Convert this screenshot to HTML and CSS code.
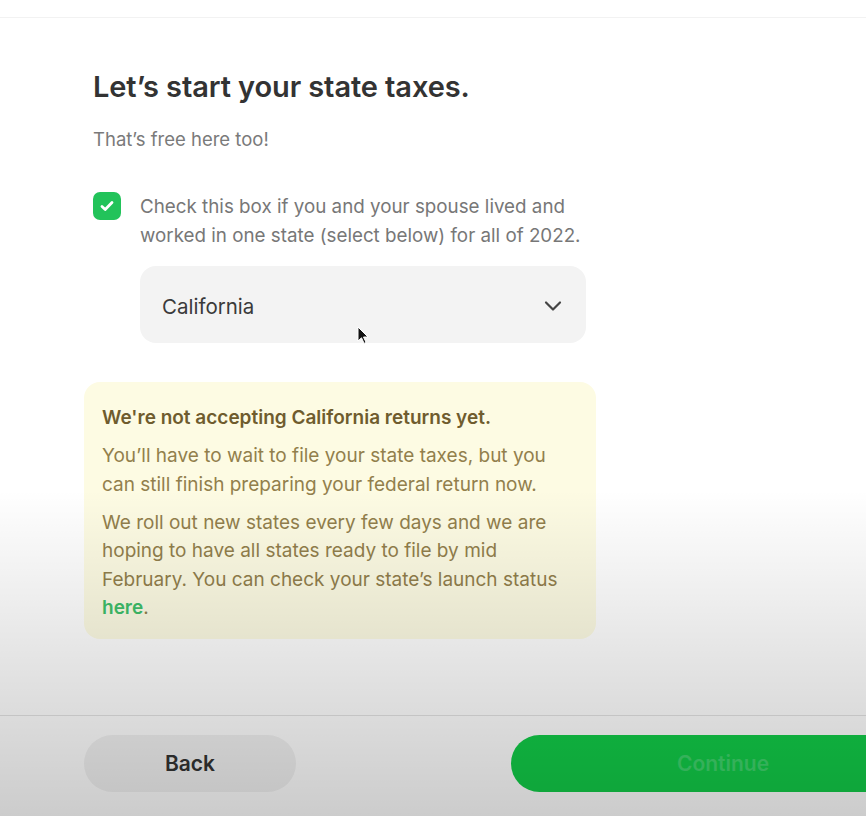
FILE: index.html
```html
<!DOCTYPE html>
<html lang="en">
<head>
    <meta charset="UTF-8">
    <meta name="viewport" content="width=device-width, initial-scale=1.0">
    <title>State taxes</title>
    <link rel="stylesheet" href="styles.css">
</head>
<body>
    <div class="topbar"></div>

    <div class="main">
        <h1>Let’s start your state taxes.</h1>
        <p class="sub">That’s free here too!</p>

        <div class="check-row">
            <span class="checkbox">
                <svg width="18" height="18" viewBox="0 0 18 18"><path d="M4 9.5l3.2 3 6.8-7" fill="none" stroke="#fff" stroke-width="2.8" stroke-linecap="round" stroke-linejoin="round"/></svg>
            </span>
            <p class="check-text">Check this box if you and your spouse lived and worked in one state (select below) for all of 2022.</p>
        </div>

        <div class="select">
            <span>California</span>
            <svg width="18" height="12" viewBox="0 0 18 12"><path d="M2 2.5l7 7 7-7" fill="none" stroke="#444" stroke-width="2.2" stroke-linecap="round" stroke-linejoin="round"/></svg>
        </div>

        <div class="notice">
            <p class="notice-title">We're not accepting California returns yet.</p>
            <p>You’ll have to wait to file your state taxes, but you can still finish preparing your federal return now.</p>
            <p>We roll out new states every few days and we are hoping to have all states ready to file by mid February. You can check your state’s launch status <a href="#">here</a>.</p>
        </div>
    </div>

    <div class="footer">
        <button class="back">Back</button>
        <button class="continue">Continue</button>
    </div>

    <div class="shade"></div>

    <svg class="cursor" width="14" height="20" viewBox="0 0 14 20"><path d="M1 1v14l3.5-3.2 2.6 5.6 2-1-2.6-5.4H11z" fill="#111" stroke="#fff" stroke-width="1"/></svg>
</body>
</html>
```

FILE: styles.css
```css
body{
    margin: 0;
    background-color: #ffffff;
    font-family: Inter, "Noto Sans", sans-serif;
    overflow: hidden;
    height: 816px;
    position: relative;
}
.topbar{
    height: 17px;
    border-bottom: 1px solid #f2f2f2;
}
.main{
    padding-left: 93px;
    width: 503px;
}
h1{
    margin: 51px 0 0 0;
    font-size: 29px;
    font-weight: 600;
    color: #333333;
    line-height: 36px;
    letter-spacing: -0.1px;
}
.sub{
    margin: 22px 0 0 0;
    font-size: 18.5px;
    color: #7a7a7a;
    line-height: 24px;
}
.check-row{
    display: flex;
    gap: 19px;
    margin-top: 41px;
}
.checkbox{
    flex-shrink: 0;
    width: 28px;
    height: 28px;
    border-radius: 7px;
    background-color: #22c35a;
    display: flex;
    align-items: center;
    justify-content: center;
}
.check-text{
    margin: 0;
    width: 446px;
    font-size: 18.8px;
    line-height: 29px;
    color: #777777;
}
.select{
    margin: 16px 0 0 47px;
    height: 77px;
    width: 446px;
    box-sizing: border-box;
    border-radius: 16px;
    background-color: #f3f3f3;
    display: flex;
    align-items: center;
    justify-content: space-between;
    padding: 3px 24px 0 22px;
    font-size: 20.5px;
    color: #3a3a3a;
}
.notice{
    margin: 39px 0 0 -9px;
    width: 512px;
    box-sizing: border-box;
    background-color: #fdfbe3;
    border-radius: 16px;
    padding: 22px 36px 16px 18px;
    font-size: 19px;
    line-height: 28.5px;
    color: #927f4c;
}
.notice p{
    margin: 9.5px 0 0 0;
}
.notice .notice-title{
    margin: 0;
    font-weight: 600;
    color: #6f5c2e;
}
.notice a{
    color: #3fbf6a;
    font-weight: 600;
    text-decoration: none;
}
.footer{
    position: absolute;
    left: 0;
    right: 0;
    top: 715px;
    bottom: 0;
    border-top: 1px solid #e4e4e4;
    display: flex;
    gap: 215px;
    padding: 19px 0 0 84px;
    overflow: hidden;
}
.footer button{
    flex-shrink: 0;
    height: 57px;
    border: none;
    border-radius: 29px;
    font-family: Inter, "Noto Sans", sans-serif;
    font-size: 21px;
    font-weight: 600;
}
.back{
    width: 212px;
    background-color: #f2f2f2;
    color: #333333;
}
.continue{
    width: 424px;
    background-color: #12cc48;
    color: #3fd46c;
}
.shade{
    position: absolute;
    left: 0;
    top: 0;
    width: 100%;
    height: 816px;
    pointer-events: none;
    background: linear-gradient(to bottom, rgba(0,0,0,0) 0, rgba(0,0,0,0) 60%, rgba(0,0,0,0.12) 84%, rgba(0,0,0,0.2) 100%);
}
.cursor{
    position: absolute;
    left: 357px;
    top: 326px;
}
```
